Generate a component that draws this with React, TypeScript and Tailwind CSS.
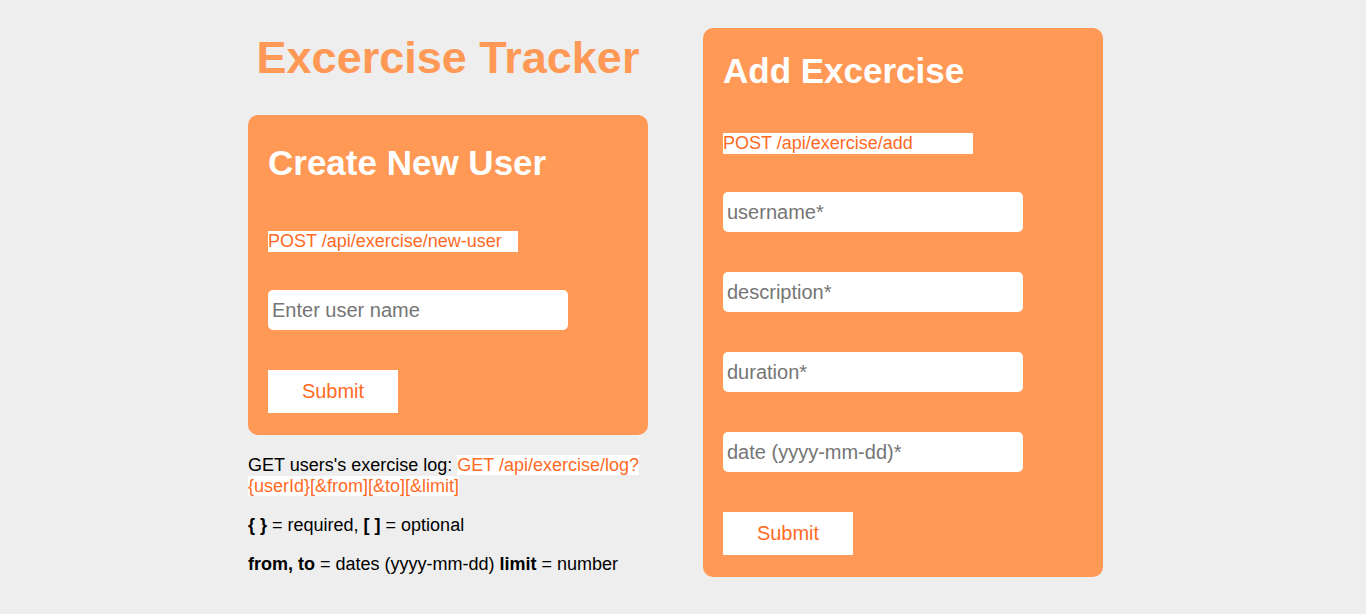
const inputClass =
  'block w-[300px] h-[40px] rounded-[5px] bg-white px-[4px] text-[20px] text-black outline-none placeholder:text-[#757575]'

const buttonClass =
  'block w-[130px] h-[43px] bg-white pb-[2px] text-[20px] text-[#ff6a1f] text-center'

function Endpoint({ children }: { children: React.ReactNode }) {
  return (
    <div className="w-[250px] h-[21px] bg-white text-[18px] leading-[21px] text-[#ff6a1f]">
      {children}
    </div>
  )
}

export default function App() {
  return (
    <div
      className="min-h-screen bg-[#eeeeee] text-black"
      style={{ fontFamily: '"Liberation Sans", Arial, sans-serif' }}
    >
      <div className="flex items-start gap-[55px] pl-[248px] pt-[28px]">
        {/* left column */}
        <div className="w-[400px]">
          <h1 className="mt-[4px] text-center text-[45px] leading-[52px] font-bold text-[#ff9955]">
            Excercise Tracker
          </h1>

          <form
            className="mt-[31px] rounded-[10px] bg-[#ff9955] px-[20px] pt-[28px] pb-[22px]"
            onSubmit={(e) => e.preventDefault()}
          >
            <h2 className="text-[35px] leading-[40px] font-bold text-white">Create New User</h2>
            <div className="mt-[48px]">
              <Endpoint>POST /api/exercise/new-user</Endpoint>
            </div>
            <input className={`${inputClass} mt-[38px]`} placeholder="Enter user name" />
            <button type="submit" className={`${buttonClass} mt-[40px]`}>
              Submit
            </button>
          </form>

          <div className="mt-[20px] text-[18px] leading-[21px]">
            <p>
              GET users's exercise log:{' '}
              <span className="bg-white text-[#ff6a1f]">
                GET /api/exercise/log?
                <br />
                {'{userId}[&from][&to][&limit]'}
              </span>
            </p>
            <p className="mt-[18px]">
              <b>{'{ }'}</b> = required, <b>[ ]</b> = optional
            </p>
            <p className="mt-[18px]">
              <b>from, to</b> = dates (yyyy-mm-dd) <b>limit</b> = number
            </p>
          </div>
        </div>

        {/* right card */}
        <form
          className="w-[400px] rounded-[10px] bg-[#ff9955] px-[20px] pt-[23px] pb-[22px]"
          onSubmit={(e) => e.preventDefault()}
        >
          <h2 className="text-[35px] leading-[40px] font-bold text-white">Add Excercise</h2>
          <div className="mt-[42px]">
            <Endpoint>POST /api/exercise/add</Endpoint>
          </div>
          <input className={`${inputClass} mt-[38px]`} placeholder="username*" />
          <input className={`${inputClass} mt-[40px]`} placeholder="description*" />
          <input className={`${inputClass} mt-[40px]`} placeholder="duration*" />
          <input className={`${inputClass} mt-[40px]`} placeholder="date (yyyy-mm-dd)*" />
          <button type="submit" className={`${buttonClass} mt-[40px]`}>
            Submit
          </button>
        </form>
      </div>
    </div>
  )
}
